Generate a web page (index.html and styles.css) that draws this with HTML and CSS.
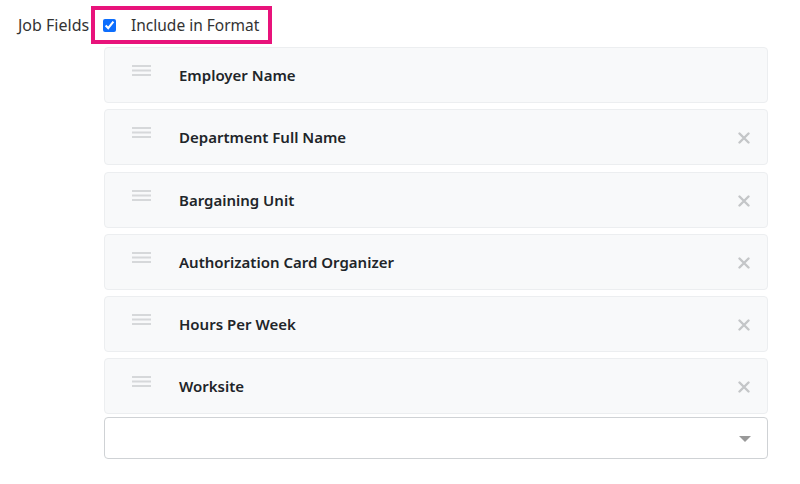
FILE: index.html
```html
<!DOCTYPE html>
<html>
<head>
<meta charset="utf-8">
<link rel="stylesheet" href="styles.css">
</head>
<body>
<div class="page">
  <div class="head-row">
    <div class="field-label">Job Fields</div>
    <label class="include-box">
      <input type="checkbox" class="check" checked>
      <span class="include-text">Include in Format</span>
    </label>
  </div>
  <div class="list">
    <div class="item">
      <span class="grip"><svg width="19" height="12" viewBox="0 0 19 12"><rect x="0" y="0" width="19" height="2" fill="#d6d8da"/><rect x="0" y="4.5" width="19" height="2" fill="#d6d8da"/><rect x="0" y="9" width="19" height="2" fill="#d6d8da"/></svg></span>
      <span class="name">Employer Name</span>
    </div>
    <div class="item">
      <span class="grip"><svg width="19" height="12" viewBox="0 0 19 12"><rect x="0" y="0" width="19" height="2" fill="#d6d8da"/><rect x="0" y="4.5" width="19" height="2" fill="#d6d8da"/><rect x="0" y="9" width="19" height="2" fill="#d6d8da"/></svg></span>
      <span class="name">Department Full Name</span>
      <span class="remove"><svg width="12" height="12" viewBox="0 0 12 12"><path d="M1.5 1.5 L10.5 10.5 M10.5 1.5 L1.5 10.5" stroke="#c4c6c8" stroke-width="2.4" stroke-linecap="round"/></svg></span>
    </div>
    <div class="item">
      <span class="grip"><svg width="19" height="12" viewBox="0 0 19 12"><rect x="0" y="0" width="19" height="2" fill="#d6d8da"/><rect x="0" y="4.5" width="19" height="2" fill="#d6d8da"/><rect x="0" y="9" width="19" height="2" fill="#d6d8da"/></svg></span>
      <span class="name">Bargaining Unit</span>
      <span class="remove"><svg width="12" height="12" viewBox="0 0 12 12"><path d="M1.5 1.5 L10.5 10.5 M10.5 1.5 L1.5 10.5" stroke="#c4c6c8" stroke-width="2.4" stroke-linecap="round"/></svg></span>
    </div>
    <div class="item">
      <span class="grip"><svg width="19" height="12" viewBox="0 0 19 12"><rect x="0" y="0" width="19" height="2" fill="#d6d8da"/><rect x="0" y="4.5" width="19" height="2" fill="#d6d8da"/><rect x="0" y="9" width="19" height="2" fill="#d6d8da"/></svg></span>
      <span class="name">Authorization Card Organizer</span>
      <span class="remove"><svg width="12" height="12" viewBox="0 0 12 12"><path d="M1.5 1.5 L10.5 10.5 M10.5 1.5 L1.5 10.5" stroke="#c4c6c8" stroke-width="2.4" stroke-linecap="round"/></svg></span>
    </div>
    <div class="item">
      <span class="grip"><svg width="19" height="12" viewBox="0 0 19 12"><rect x="0" y="0" width="19" height="2" fill="#d6d8da"/><rect x="0" y="4.5" width="19" height="2" fill="#d6d8da"/><rect x="0" y="9" width="19" height="2" fill="#d6d8da"/></svg></span>
      <span class="name">Hours Per Week</span>
      <span class="remove"><svg width="12" height="12" viewBox="0 0 12 12"><path d="M1.5 1.5 L10.5 10.5 M10.5 1.5 L1.5 10.5" stroke="#c4c6c8" stroke-width="2.4" stroke-linecap="round"/></svg></span>
    </div>
    <div class="item">
      <span class="grip"><svg width="19" height="12" viewBox="0 0 19 12"><rect x="0" y="0" width="19" height="2" fill="#d6d8da"/><rect x="0" y="4.5" width="19" height="2" fill="#d6d8da"/><rect x="0" y="9" width="19" height="2" fill="#d6d8da"/></svg></span>
      <span class="name">Worksite</span>
      <span class="remove"><svg width="12" height="12" viewBox="0 0 12 12"><path d="M1.5 1.5 L10.5 10.5 M10.5 1.5 L1.5 10.5" stroke="#c4c6c8" stroke-width="2.4" stroke-linecap="round"/></svg></span>
    </div>
  </div>
  <div class="select">
    <span class="caret"><svg width="12" height="6" viewBox="0 0 12 6"><path d="M0 0 L12 0 L6 6 Z" fill="#999"/></svg></span>
  </div>
</div>
</body>
</html>
```
FILE: styles.css
```css
html, body {
  margin: 0;
  padding: 0;
  background: #ffffff;
}
body {
  font-family: "Noto Sans", "Open Sans", sans-serif;
  color: #212529;
}
.page {
  padding-top: 6px;
}
.head-row {
  display: flex;
  align-items: center;
  height: 38px;
}
.field-label {
  width: 91px;
  box-sizing: border-box;
  padding-left: 18px;
  font-size: 16px;
  color: #333;
  white-space: nowrap;
}
.include-box {
  box-sizing: border-box;
  width: 181px;
  height: 38px;
  border: 4.5px solid #e8137b;
  display: flex;
  align-items: center;
  padding-left: 8px;
}
.check {
  margin: 0;
  width: 13px;
  height: 13px;
  accent-color: #0d6efd;
}
.include-text {
  margin-left: 15px;
  font-size: 15.5px;
  color: #333;
}
.list {
  margin-top: 3px;
  margin-left: 104px;
  width: 664px;
  display: flex;
  flex-direction: column;
  gap: 6.3px;
}
.item {
  box-sizing: border-box;
  height: 56px;
  background: #f8f9fa;
  border: 1px solid #eceef0;
  border-radius: 4px;
  display: flex;
  align-items: center;
}
.grip {
  width: 19px;
  height: 12px;
  margin-left: 27px;
  margin-top: -8px;
  display: flex;
}
.name {
  margin-left: 28px;
  font-size: 15px;
  font-weight: 600;
  color: #212529;
}
.remove {
  margin-left: auto;
  margin-right: 17px;
  width: 12px;
  height: 12px;
  display: flex;
  margin-top: 2px;
}
.select {
  box-sizing: border-box;
  margin-top: 3px;
  margin-left: 104px;
  width: 664px;
  height: 42px;
  border: 1px solid #cfd2d5;
  border-radius: 4px;
  background: #fff;
  display: flex;
  align-items: center;
  justify-content: flex-end;
  padding-right: 16px;
}
.caret {
  display: flex;
  margin-top: 2px;
}
```
